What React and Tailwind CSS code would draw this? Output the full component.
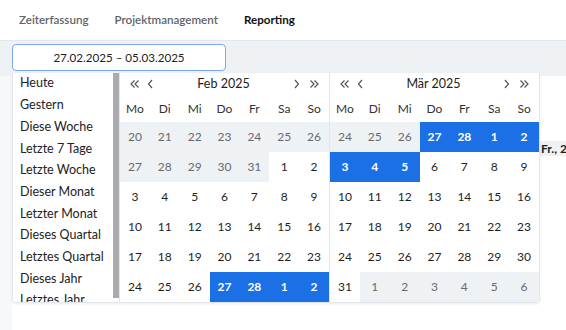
import React from "react";

const presets = [
  "Heute",
  "Gestern",
  "Diese Woche",
  "Letzte 7 Tage",
  "Letzte Woche",
  "Dieser Monat",
  "Letzter Monat",
  "Dieses Quartal",
  "Letztes Quartal",
  "Dieses Jahr",
  "Letztes Jahr",
];

const weekdays = ["Mo", "Di", "Mi", "Do", "Fr", "Sa", "So"];

// o = anderer Monat, i = aktueller Monat, s = ausgewählt
const feb = [
  [[20, "o"], [21, "o"], [22, "o"], [23, "o"], [24, "o"], [25, "o"], [26, "o"]],
  [[27, "o"], [28, "o"], [29, "o"], [30, "o"], [31, "o"], [1, "i"], [2, "i"]],
  [[3, "i"], [4, "i"], [5, "i"], [6, "i"], [7, "i"], [8, "i"], [9, "i"]],
  [[10, "i"], [11, "i"], [12, "i"], [13, "i"], [14, "i"], [15, "i"], [16, "i"]],
  [[17, "i"], [18, "i"], [19, "i"], [20, "i"], [21, "i"], [22, "i"], [23, "i"]],
  [[24, "i"], [25, "i"], [26, "i"], [27, "s"], [28, "s"], [1, "s"], [2, "s"]],
];

const mar = [
  [[24, "o"], [25, "o"], [26, "o"], [27, "s"], [28, "s"], [1, "s"], [2, "s"]],
  [[3, "s"], [4, "s"], [5, "s"], [6, "i"], [7, "i"], [8, "i"], [9, "i"]],
  [[10, "i"], [11, "i"], [12, "i"], [13, "i"], [14, "i"], [15, "i"], [16, "i"]],
  [[17, "i"], [18, "i"], [19, "i"], [20, "i"], [21, "i"], [22, "i"], [23, "i"]],
  [[24, "i"], [25, "i"], [26, "i"], [27, "i"], [28, "i"], [29, "i"], [30, "i"]],
  [[31, "i"], [1, "o"], [2, "o"], [3, "o"], [4, "o"], [5, "o"], [6, "o"]],
];

const cellStyles = {
  o: "bg-[#eff2f5] text-[#666a70]",
  i: "bg-white text-[#1f1f1f]",
  s: "bg-[#1b70e6] text-white font-bold",
};

function Chevron({ dir, double }) {
  const single = dir === "left" ? "M5 1 L1.5 5 L5 9" : "M1 1 L4.5 5 L1 9";
  return (
    <svg width={double ? 9 : 6} height="10" viewBox={double ? "0 0 9 10" : "0 0 6 10"} fill="none" stroke="#555" strokeWidth="1.2">
      {double ? (
        dir === "left" ? (
          <>
            <path d="M4.5 1.5 L1 5 L4.5 8.5" />
            <path d="M8.5 1.5 L5 5 L8.5 8.5" />
          </>
        ) : (
          <>
            <path d="M0.5 1.5 L4 5 L0.5 8.5" />
            <path d="M4.5 1.5 L8 5 L4.5 8.5" />
          </>
        )
      ) : (
        <path d={single} />
      )}
    </svg>
  );
}

function Month({ title, weeks }) {
  return (
    <div className="w-[210px] shrink-0 flex flex-col border-l border-[#e3e5e8] bg-white">
      <div className="h-[23px] flex items-center px-[10px] text-[12.5px] text-[#222]">
        <div className="flex items-center gap-[8px]">
          <Chevron dir="left" double />
          <Chevron dir="left" />
        </div>
        <div className="flex-1 text-center pt-[1px]">{title}</div>
        <div className="flex items-center gap-[10px]">
          <Chevron dir="right" />
          <Chevron dir="right" double />
        </div>
      </div>
      <div className="h-[27px] grid grid-cols-7 items-center text-[12px] text-[#333]">
        {weekdays.map((d) => (
          <div key={d} className="text-center">
            {d}
          </div>
        ))}
      </div>
      <div className="grid grid-cols-7 text-[12px]">
        {weeks.flat().map(([n, t], i) => (
          <div key={i} className={`h-[30px] flex items-center justify-center ${cellStyles[t]}`}>
            {n}
          </div>
        ))}
      </div>
    </div>
  );
}

export default function App() {
  return (
    <div className="relative w-[566px] h-[330px] overflow-hidden bg-white font-['Lato',sans-serif]">
      <div className="h-[41px] flex items-center gap-[26px] px-[19px] border-b border-[#e3e6ea] text-[11.6px] font-semibold">
        <span className="text-[#5f6368]">Zeiterfassung</span>
        <span className="text-[#5f6368]">Projektmanagement</span>
        <span className="text-[#111] font-bold">Reporting</span>
      </div>
      <div className="h-[35px] bg-[#eff2f5] px-[12px] pt-[3px]">
        <div className="w-[214px] h-[27px] rounded-[4px] border border-[#7ea8ee] bg-white flex items-center justify-center text-[11.6px] text-[#222]">
          27.02.2025 – 05.03.2025
        </div>
      </div>
      <div className="flex h-[254px]">
        <div className="w-[12px] shrink-0 bg-[#f7f8fa]" />
        <div className="flex-1 min-w-0 overflow-hidden bg-white pt-[65px]">
          <div className="h-[15px] bg-[#eff2f5] flex items-center pl-[529px] text-[12px] font-bold text-[#222] whitespace-nowrap">
            <span className="shrink-0">Fr., 28.02.</span>
          </div>
        </div>
      </div>

      <div className="absolute left-[12px] top-[73px] w-[528px] h-[230px] flex bg-white border-b border-r border-[#e3e5e8] rounded-b-[4px] shadow-[0_1px_3px_rgba(0,0,0,0.08)] overflow-hidden">
        <div className="w-[107px] shrink-0 flex border-l border-[#e3e5e8]">
          <div className="flex-1 overflow-hidden pl-[7px] text-[12.5px] text-[#222]">
            {presets.map((p) => (
              <div key={p} className="h-[21.7px] flex items-center whitespace-nowrap">
                {p}
              </div>
            ))}
          </div>
          <div className="w-[6px] h-[225px] bg-[#a9abae]" />
        </div>
        <Month title="Feb 2025" weeks={feb} />
        <Month title="Mär 2025" weeks={mar} />
      </div>
    </div>
  );
}
